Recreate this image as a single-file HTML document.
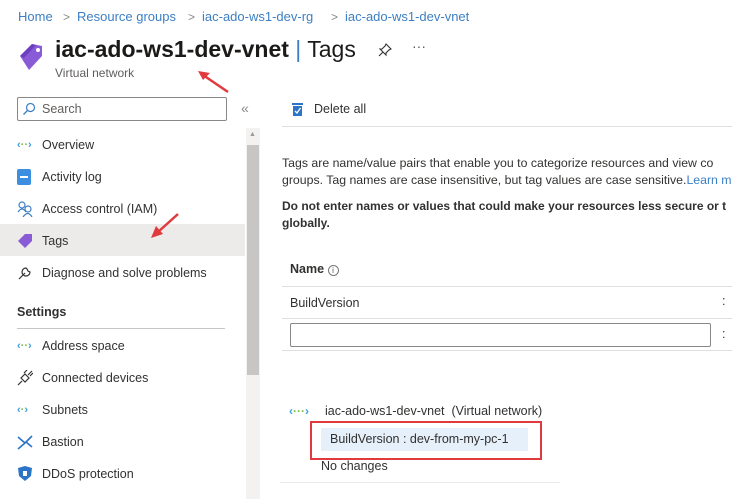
<!DOCTYPE html>
<html><head><meta charset="utf-8"><style>
*{margin:0;padding:0;box-sizing:border-box}
body{width:732px;height:499px;overflow:hidden;background:#fff;font-family:"Liberation Sans",sans-serif;color:#323130;position:relative;font-size:12.5px}
.a{position:absolute;white-space:nowrap}
.bc{color:#3c7fc4;font-size:13px;top:9px}
.sep{color:#888;font-size:12px;top:10px}
.nav{left:42px;font-size:12.5px;color:#323130}
.ic{position:absolute;left:17px}
.ln{position:absolute;height:1px;background:#e1dfdd}
</style></head><body>
<div class="a bc" style="left:18px">Home</div>
<div class="a sep" style="left:63px">&gt;</div>
<div class="a bc" style="left:77px">Resource groups</div>
<div class="a sep" style="left:188px">&gt;</div>
<div class="a bc" style="left:202px">iac-ado-ws1-dev-rg</div>
<div class="a sep" style="left:331px">&gt;</div>
<div class="a bc" style="left:345px">iac-ado-ws1-dev-vnet</div>

<svg class="a" style="left:18px;top:40px" width="26" height="32" viewBox="0 0 26 32"><path d="M2 16 L14 4 L24 6 L24 16 L11 30 Z" fill="#8a5bd6"/><path d="M2 16 L14 4 L18 5 L6 18 Z" fill="#6b3fbf"/><circle cx="20" cy="10" r="2" fill="#fff"/></svg>
<div class="a" style="left:55px;top:36px;font-size:23px;color:#1b1a19"><b style="font-weight:600">iac-ado-ws1-dev-vnet</b> <span style="color:#3c7fc4;font-weight:300">|</span> Tags</div>
<svg class="a" style="left:378px;top:43px" width="14" height="14" viewBox="0 0 14 14"><path d="M8 1 L13 6 L11 7 L8 10 L8 12 L2 6 L4 6 L7 3 Z M5 9 L1 13" fill="none" stroke="#333" stroke-width="1.1"/></svg>
<div class="a" style="left:412px;top:38px;font-size:14px;color:#555">···</div>
<div class="a" style="left:55px;top:66px;font-size:12px;color:#605e5c">Virtual network</div>
<svg class="a" style="left:195px;top:68px" width="40" height="30"><path d="M33 24 L8 7" stroke="#e03a3e" stroke-width="2.5"/><path d="M3 3 L15 5 L8 12 Z" fill="#e03a3e"/></svg>

<div class="a" style="left:17px;top:97px;width:210px;height:24px;border:1px solid #8a8886;border-radius:2px"></div>
<svg class="a" style="left:22px;top:102px" width="14" height="14"><circle cx="8.5" cy="5.5" r="4" fill="none" stroke="#3c7fc4" stroke-width="1.2"/><path d="M5.5 8.5 L1.5 12.5" stroke="#3c7fc4" stroke-width="1.3"/></svg>
<div class="a" style="left:42px;top:102px;font-size:12.5px;color:#605e5c">Search</div>
<div class="a" style="left:241px;top:100px;font-size:14px;color:#888">«</div>

<svg class="a" style="left:291px;top:102px" width="13" height="15"><rect x="1" y="1" width="11" height="2" fill="#2b74c7"/><rect x="2" y="4" width="9" height="10" fill="#2b74c7"/><path d="M4 9 L6 11 L9.5 6" stroke="#fff" stroke-width="1.3" fill="none"/></svg>
<div class="a" style="left:314px;top:102px">Delete all</div>
<div class="ln" style="left:282px;top:126px;width:450px"></div>

<div class="a" style="left:246px;top:128px;width:14px;height:371px;background:#f3f2f1"></div>
<div class="a" style="left:247px;top:145px;width:12px;height:230px;background:#c8c6c4"></div>
<div class="a" style="left:249px;top:131px;font-size:7px;color:#999">▲</div>

<div class="a" style="left:0;top:224px;width:245px;height:32px;background:#edebe9"></div>

<div class="a ic" style="top:139px;font-size:11px;color:#3c9fe0;font-weight:bold">‹<span style="color:#7bc043">··</span>›</div>
<div class="a nav" style="top:138px">Overview</div>
<div class="a ic" style="top:169px;width:14px;height:16px;background:#3c8ee0;border-radius:2px"><div style="margin:7px 3px;height:2px;background:#fff"></div></div>
<div class="a nav" style="top:170px">Activity log</div>
<svg class="a ic" style="top:201px" width="16" height="16"><circle cx="5" cy="4" r="3" fill="none" stroke="#3c7fc4" stroke-width="1.2"/><path d="M1 11 Q5 5 9 11" fill="none" stroke="#3c7fc4" stroke-width="1.2"/><circle cx="11" cy="8" r="3" fill="none" stroke="#3c7fc4" stroke-width="1.2"/><path d="M6 16 Q11 9 15 16" fill="none" stroke="#3c7fc4" stroke-width="1.2"/></svg>
<div class="a nav" style="top:202px">Access control (IAM)</div>
<svg class="a ic" style="top:233px" width="16" height="16"><path d="M1 8 L8 1 L15 1 L15 8 L8 15 Z" fill="#8a5bd6"/></svg>
<div class="a nav" style="top:234px">Tags</div>
<svg class="a" style="left:148px;top:210px" width="35" height="32"><path d="M30 4 L10 22" stroke="#e03a3e" stroke-width="2.5"/><path d="M3 28 L8 16 L15 24 Z" fill="#e03a3e"/></svg>
<svg class="a ic" style="top:265px" width="16" height="16"><path d="M2 14 L8 8 M9 3 A4 4 0 1 0 13 7 L11 6 L10 4 Z" fill="none" stroke="#333" stroke-width="1.2"/></svg>
<div class="a nav" style="top:266px">Diagnose and solve problems</div>
<div class="a" style="left:17px;top:305px;font-weight:bold;font-size:12.5px">Settings</div>
<div class="ln" style="left:17px;top:328px;width:208px;background:#c8c6c4"></div>
<div class="a ic" style="top:340px;font-size:11px;color:#3c9fe0;font-weight:bold">‹<span style="color:#7bc043">··</span>›</div>
<div class="a nav" style="top:339px">Address space</div>
<svg class="a ic" style="top:370px" width="16" height="16"><path d="M1 15 L5 11 M15 1 L11 5 M4 8 L8 12 L12 8 L8 4 Z M7 3 L10 0 M13 6 L16 3" fill="none" stroke="#333" stroke-width="1.2"/></svg>
<div class="a nav" style="top:371px">Connected devices</div>
<div class="a ic" style="top:404px;font-size:11px;color:#3c9fe0;font-weight:bold">‹<span style="color:#7bc043">·</span>›</div>
<div class="a nav" style="top:403px">Subnets</div>
<svg class="a ic" style="top:434px" width="16" height="16"><path d="M1 3 L8 9 L1 15 M15 2 L9 8 L15 13" fill="none" stroke="#2b74c7" stroke-width="1.6"/></svg>
<div class="a nav" style="top:435px">Bastion</div>
<svg class="a ic" style="top:465px" width="16" height="17"><path d="M8 1 L15 3 L14 11 L8 16 L2 11 L1 3 Z" fill="#2b74c7"/><rect x="6" y="6" width="4" height="5" fill="#fff"/></svg>
<div class="a nav" style="top:467px">DDoS protection</div>

<div class="a" style="left:282px;top:155px;line-height:17px;font-size:12.3px">Tags are name/value pairs that enable you to categorize resources and view co<br>groups. Tag names are case insensitive, but tag values are case sensitive.<span style="color:#3c7fc4">Learn m</span></div>
<div class="a" style="left:282px;top:198px;line-height:17px;font-size:12px;font-weight:bold">Do not enter names or values that could make your resources less secure or t<br>globally.</div>
<div class="a" style="left:290px;top:262px;font-weight:bold;font-size:12.5px">Name <span style="display:inline-block;width:11px;height:11px;border:1px solid #777;border-radius:50%;font-size:8px;text-align:center;line-height:9px;font-weight:normal;color:#555">i</span></div>
<div class="ln" style="left:282px;top:286px;width:450px"></div>
<div class="a" style="left:290px;top:296px">BuildVersion</div>
<div class="a" style="left:722px;top:294px">:</div>
<div class="ln" style="left:282px;top:318px;width:450px"></div>
<div class="a" style="left:290px;top:323px;width:421px;height:24px;border:1px solid #8a8886;border-radius:2px"></div>
<div class="a" style="left:722px;top:327px">:</div>
<div class="ln" style="left:282px;top:350px;width:450px"></div>

<div class="a" style="left:289px;top:404px;font-size:12px;color:#3c9fe0;font-weight:bold">‹<span style="color:#7bc043">···</span>›</div>
<div class="a" style="left:325px;top:404px">iac-ado-ws1-dev-vnet&nbsp;&nbsp;(Virtual network)</div>
<div class="a" style="left:310px;top:421px;width:232px;height:39px;border:2.5px solid #e03a3e"></div>
<div class="a" style="left:321px;top:428px;width:207px;height:23px;background:#e6f0fa"></div>
<div class="a" style="left:330px;top:432px">BuildVersion : dev-from-my-pc-1</div>
<div class="a" style="left:321px;top:459px">No changes</div>
<div class="ln" style="left:280px;top:482px;width:280px;background:#edebe9"></div>
</body></html>
